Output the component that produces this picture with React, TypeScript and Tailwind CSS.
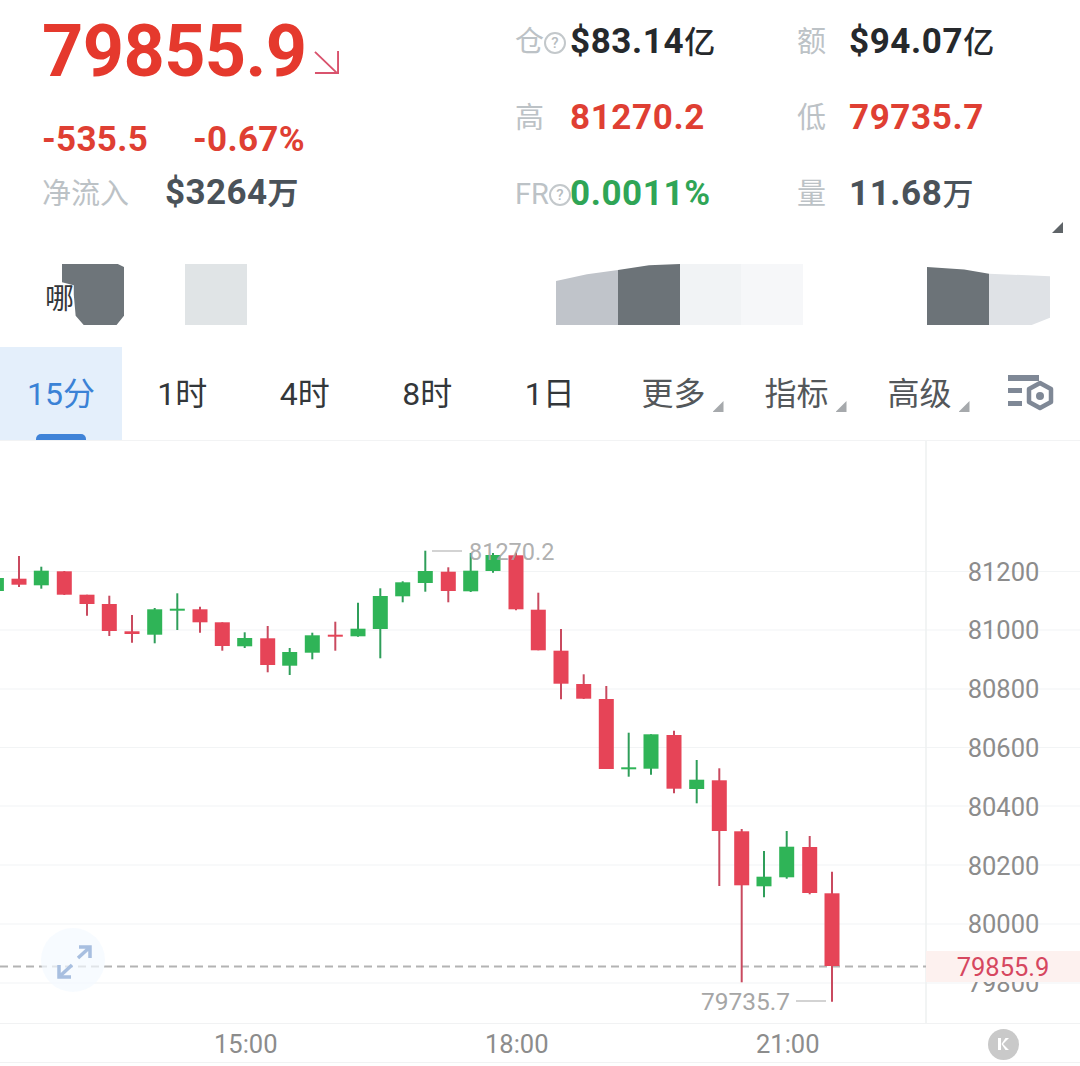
const RED = "#e64457";
const GREEN = "#2fb457";
const RED_WICK = "#c94a5f";
const GREEN_WICK = "#2f9e5a";

// x, wick top, body top, body bottom, wick bottom (page coordinates), up?
const candles: [number, number, number, number, number, boolean][] = [
  [-3.6, 578, 578, 591, 591, true],
  [19, 556, 578.7, 584.7, 587, false],
  [41.3, 566.7, 570.7, 585.3, 588.7, true],
  [64.3, 571, 571.3, 594.7, 595, false],
  [87, 594.7, 594.7, 604, 615.7, false],
  [109.3, 595.7, 604, 631, 636, false],
  [132, 615, 631.3, 634, 642.7, false],
  [154.7, 608, 609.3, 634.7, 643.3, true],
  [177.3, 593.3, 608.7, 610.3, 630, true],
  [200, 606.7, 609.3, 622.3, 632.7, false],
  [222.3, 622.3, 622.3, 646, 650.7, false],
  [244.7, 632.3, 638, 646.3, 648, true],
  [267.7, 626, 638.3, 665, 672.3, false],
  [289.7, 648, 652, 665.7, 675, true],
  [312.3, 632.7, 635.3, 652.7, 659.3, true],
  [335.3, 621.7, 634.7, 636.3, 650.7, false],
  [358, 602.7, 628.7, 636.3, 636.7, true],
  [380.3, 588.3, 596, 629, 658.3, true],
  [402.7, 581.3, 582.3, 596.3, 602.3, true],
  [425.3, 550.7, 571, 583, 591.7, true],
  [448.3, 567.3, 571.7, 591, 602.3, false],
  [470.7, 553, 570.7, 591.3, 592, true],
  [493, 553, 555, 571, 572.7, true],
  [516, 552.7, 555.3, 609.3, 610.3, false],
  [538.3, 592.7, 609.7, 650.3, 650.3, false],
  [561, 629, 650.7, 683.7, 699.3, false],
  [583.7, 674.3, 684, 698.7, 699, false],
  [606.3, 686, 699, 769, 769, false],
  [628.7, 732.7, 767.3, 769.3, 776.7, true],
  [651, 734.3, 734.3, 768.7, 774.7, true],
  [674, 730.7, 735, 788.7, 793.3, false],
  [696.7, 760, 779.7, 789, 803.3, true],
  [719.3, 768.3, 780.3, 831, 886, false],
  [741.7, 829, 831.3, 885.3, 982.3, false],
  [764, 851, 876.7, 886.3, 897.3, true],
  [786.7, 831, 846.7, 877.3, 878.7, true],
  [809.7, 836, 847, 893, 894.3, false],
  [832, 871.7, 893.3, 966, 1001.7, false],
];

const axis: [string, number][] = [
  ["81200", 572],
  ["81000", 630],
  ["80800", 689],
  ["80600", 748],
  ["80400", 807],
  ["80200", 866],
  ["80000", 924],
  ["79800", 983],
];

const gridLines = [571.5, 630, 689, 747.5, 806, 865, 924, 983];
const tabs = ["1时", "4时", "8时", "1日"];
const menus = ["更多", "指标", "高级"];

function Help() {
  return (
    <span className="flex h-[22px] w-[22px] shrink-0 items-center justify-center rounded-full border-2 border-[#c3c8cb] text-[15px] font-medium text-[#b7bcc0]">
      ?
    </span>
  );
}

function Stat({
  label,
  value,
  unit,
  color,
  help,
  narrow,
}: {
  label: string;
  value: string;
  unit?: string;
  color: string;
  help?: boolean;
  narrow?: boolean;
}) {
  return (
    <div className="flex h-[76px] items-center">
      <div className={`mt-[2px] flex shrink-0 items-center text-[29px] text-[#bcc2c6] ${narrow ? "w-[52px]" : "w-[55px]"}`}>
        <span>{label}</span>
        {help && <Help />}
      </div>
      <span className={`relative mt-[1px] text-[35px] font-bold tracking-[0.6px] ${color}`}>
        {value}
        {unit && <span className="text-[31px] font-medium">{unit}</span>}
      </span>
    </div>
  );
}

function Corner({ className }: { className: string }) {
  return <span className={`h-[11px] w-[11px] [clip-path:polygon(100%_0,100%_100%,0_100%)] ${className}`} />;
}

function Chart() {
  return (
    <svg viewBox="0 441 1080 582" className="h-full w-full">
      {gridLines.map((y) => (
        <line key={y} x1={0} x2={1080} y1={y} y2={y} stroke="#f2f4f5" strokeWidth={1.2} />
      ))}
      <line x1={926} x2={926} y1={441} y2={1023} stroke="#eef0f1" strokeWidth={1.5} />

      {axis.map(([t, y]) => (
        <text key={t} x={1003.5} y={y + 9} textAnchor="middle" fontSize={25.5} fill="#8c8c8c">
          {t}
        </text>
      ))}

      <line x1={0} x2={926} y1={966.5} y2={966.5} stroke="#b3b3b3" strokeWidth={2} strokeDasharray="8 5" />

      {candles.map(([x, wt, bt, bb, wb, up]) => (
        <g key={x}>
          <line x1={x} x2={x} y1={wt} y2={wb} stroke={up ? GREEN_WICK : RED_WICK} strokeWidth={2} />
          <rect x={x - 7.5} y={bt} width={15} height={Math.max(bb - bt, 2)} fill={up ? GREEN : RED} />
        </g>
      ))}

      <line x1={432} x2={462} y1={551} y2={551} stroke="#c4c4c4" strokeWidth={1.5} />
      <text x={469} y={560} fontSize={23.5} fill="#a6a6a6" fillOpacity={0.9}>
        81270.2
      </text>
      <text x={701} y={1010} fontSize={24.5} fill="#a6a6a6">
        79735.7
      </text>
      <line x1={796} x2={826} y1={1001} y2={1001} stroke="#c4c4c4" strokeWidth={1.5} />

      <rect x={926} y={951} width={154} height={31} fill="#fdf1ef" />
      <text x={1003} y={976} textAnchor="middle" fontSize={25.5} fill="#d6475f">
        79855.9
      </text>
    </svg>
  );
}

export default function App() {
  return (
    <div className="h-[1066px] w-[1080px] overflow-hidden bg-white font-['Roboto','Noto_Sans_CJK_SC',sans-serif]">
      {/* 行情头部 */}
      <div className="flex h-[264px]">
        <div className="w-[515px] shrink-0 pl-[42px]">
          <div className="flex h-[104px] items-center">
            <span className="text-[72px] font-bold tracking-[-0.6px] text-[#e5392d]">79855.9</span>
            <svg viewBox="0 0 26 26" className="mt-[20px] ml-[7px] h-[25px] w-[25px]" fill="none" stroke="#d9536d" strokeWidth={2}>
              <path d="M1 2 L24 24 M1 24 H25 V1" />
            </svg>
          </div>
          <div className="mt-[14px] flex h-[44px] items-center text-[35px] font-bold tracking-[0.3px] text-[#df3f33]">
            <span className="w-[151px]">-535.5</span>
            <span>-0.67%</span>
          </div>
          <div className="mt-[11px] flex h-[40px] items-center">
            <span className="mt-[3px] w-[123px] text-[29px] text-[#bcc2c6]">净流入</span>
            <span className="text-[35px] font-bold tracking-[0.4px] text-[#4a5259]">
              $3264<span className="text-[31px]">万</span>
            </span>
          </div>
        </div>
        <div className="flex-1 pt-[4px]">
          <div className="grid grid-cols-[282px_1fr]">
            <Stat label="仓" help value="$83.14" unit="亿" color="text-[#26292c]" />
            <Stat label="额" narrow value="$94.07" unit="亿" color="text-[#26292c]" />
            <Stat label="高" value="81270.2" color="text-[#df3f33]" />
            <Stat label="低" narrow value="79735.7" color="text-[#df3f33]" />
            <Stat label="FR" help value="0.0011%" color="text-[#2fa556]" />
            <Stat label="量" narrow value="11.68" unit="万" color="text-[#4a5259]" />
          </div>
          <div className="-mt-[10px] flex justify-end pr-[17px]">
            <Corner className="bg-[#5f6468]" />
          </div>
        </div>
      </div>

      {/* 打码的一行 */}
      <div className="flex h-[61px] items-center pl-[45px]">
        <span className="relative z-10 mt-[10px] w-[30px] shrink-0 text-[29px] text-[#33373a]">哪</span>
        <div className="-ml-[13px] h-full w-[62px] shrink-0 bg-[#6e757a] [clip-path:polygon(0_0,90%_0,100%_5%,100%_85%,88%_100%,35%_100%,22%_85%,19%_50%,19%_35%,0_30%)]" />
        <div className="ml-[61px] h-full w-[62px] shrink-0 bg-[#e0e4e6]" />
        <div className="ml-[309px] h-full w-[62px] shrink-0 bg-[#c0c4ca] [clip-path:polygon(0_28%,50%_17%,100%_10%,100%_100%,0_100%)]" />
        <div className="h-full w-[62px] shrink-0 bg-[#6c7378] [clip-path:polygon(0_10%,50%_2%,100%_0,100%_100%,0_100%)]" />
        <div className="h-full w-[61px] shrink-0 bg-[#f1f3f5]" />
        <div className="h-full w-[62px] shrink-0 bg-[#f6f7f9]" />
        <div className="ml-[124px] h-full w-[62px] shrink-0 bg-[#6c7378] [clip-path:polygon(0_5%,60%_9%,100%_16%,100%_100%,0_100%)]" />
        <div className="h-full w-[61px] shrink-0 bg-[#dfe2e6] [clip-path:polygon(0_16%,100%_20%,100%_88%,70%_100%,0_100%)]" />
      </div>

      {/* 周期 */}
      <div className="mt-[22px] flex h-[94px] items-center border-b border-[#f2f3f4] text-[32px] text-[#33373a]">
        <div className="relative flex h-full w-[122px] items-center justify-center bg-[#e4effb] text-[#3a82d6]">
          15分
          <span className="absolute bottom-0 left-[36px] h-[6px] w-[50px] rounded-t-[5px] bg-[#3f83d8]" />
        </div>
        {tabs.map((t) => (
          <div key={t} className="flex h-full w-[122.5px] items-center justify-center pr-[2px]">
            {t}
          </div>
        ))}
        {menus.map((t) => (
          <div key={t} className="flex h-full w-[123px] items-center justify-center text-[#53575a]">
            <span>{t}</span>
            <Corner className="mt-[26px] ml-[7px] -mr-[18px] bg-[#a6a9ac]" />
          </div>
        ))}
        <svg viewBox="0 0 46 38" className="ml-[27px] h-[38px] w-[46px]">
          <rect x={0} y={0} width={31} height={6} fill="#7f8896" />
          <rect x={0} y={13} width={14} height={5} fill="#7f8896" />
          <rect x={0} y={26} width={14} height={5} fill="#7f8896" />
          <path d="M32 8 L43 14 V27 L32 33 L21 27 V14 Z" fill="none" stroke="#7f8896" strokeWidth={4.5} strokeLinejoin="round" />
          <circle cx={32} cy={21} r={4} fill="#7f8896" />
        </svg>
      </div>

      {/* K线 */}
      <div className="relative h-[582px]">
        <Chart />
        <div className="absolute top-[487px] left-[41px] flex h-[64px] w-[64px] items-center justify-center rounded-full bg-[#f4f9ff]/70">
          <svg viewBox="0 0 64 64" className="h-[64px] w-[64px]" fill="none" stroke="#a8bfe0" strokeWidth={3.5}>
            <path d="M37 30 L48 20 M38 19 H49 V30 M31 37 L19 48 M18 37 V49 H30" />
          </svg>
        </div>
      </div>

      {/* 时间轴 */}
      <div className="flex h-[40px] items-center border-y border-[#f1f2f3] pt-[2px] text-[25.5px] text-[#8c8c8c]">
        <div className="flex w-[926px] pl-[214px]">
          <span className="w-[271px]">15:00</span>
          <span className="w-[271px]">18:00</span>
          <span>21:00</span>
        </div>
        <div className="ml-[62px] flex h-[31px] w-[31px] items-center justify-center rounded-full bg-[#c9c9c9]">
          <svg viewBox="0 0 16 16" className="h-[16px] w-[16px]" fill="#ffffff">
            <path d="M2 2 H5 V14 H2 Z M13 2 L7 8 L13 14 H9.5 L5.5 8 L9.5 2 Z" />
          </svg>
        </div>
      </div>
    </div>
  );
}
